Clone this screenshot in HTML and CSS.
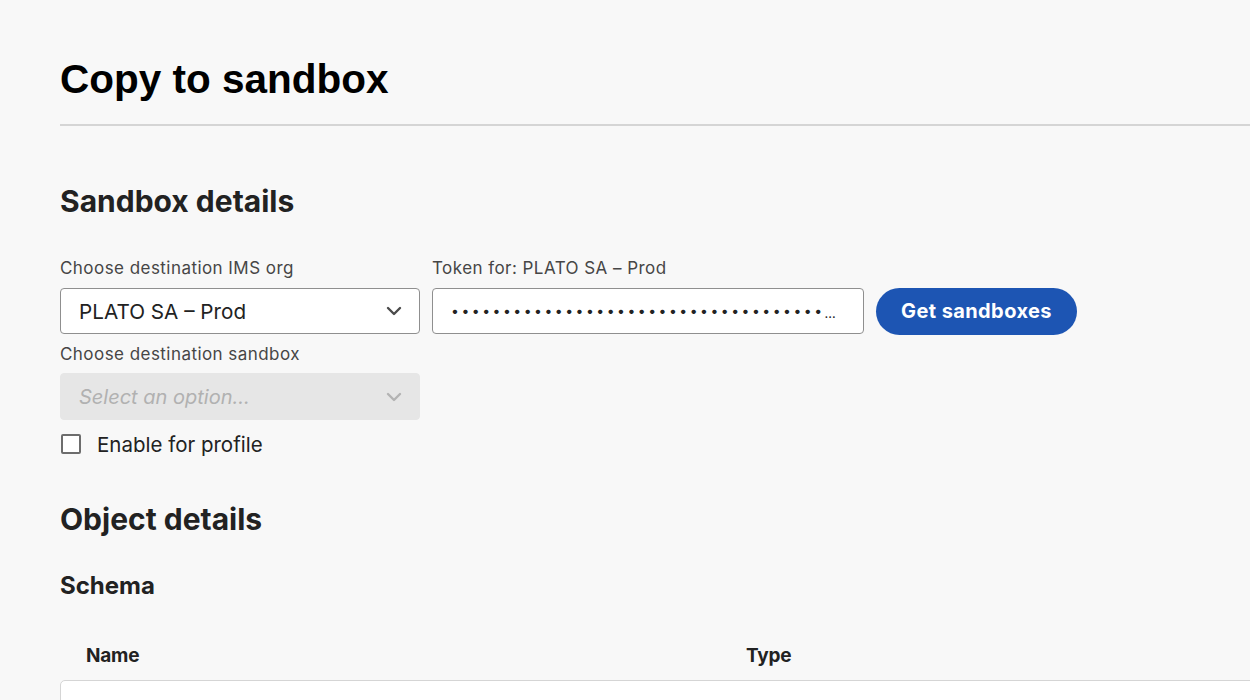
FILE: index.html
```html
<!DOCTYPE html>
<html lang="en">
<head>
<meta charset="utf-8">
<title>Copy to sandbox</title>
<link rel="stylesheet" href="styles.css">
</head>
<body>
<main class="page">
  <h1 class="title">Copy to sandbox</h1>
  <hr class="divider">

  <h2 class="section">Sandbox details</h2>

  <div class="field-row">
    <div class="field">
      <label class="label">Choose destination IMS org</label>
      <div class="picker">
        <span class="picker-value">PLATO SA – Prod</span>
        <svg class="chevron" width="16" height="10" viewBox="0 0 16 10"><path d="M2 2 L8 8 L14 2" fill="none" stroke="#4b4b4b" stroke-width="2.4" stroke-linecap="round" stroke-linejoin="round"/></svg>
      </div>
    </div>
    <div class="field">
      <label class="label">Token for: PLATO SA – Prod</label>
      <div class="textfield"><span class="dots">••••••••••••••••••••••••••••••••••••</span><span class="ellipsis">…</span></div>
    </div>
    <button class="btn">Get sandboxes</button>
  </div>

  <div class="field">
    <label class="label label-2">Choose destination sandbox</label>
    <div class="picker picker-disabled">
      <span class="picker-placeholder">Select an option...</span>
      <svg class="chevron" width="16" height="10" viewBox="0 0 16 10"><path d="M2 2 L8 8 L14 2" fill="none" stroke="#b3b3b3" stroke-width="2.4" stroke-linecap="round" stroke-linejoin="round"/></svg>
    </div>
  </div>

  <label class="checkbox-row">
    <span class="checkbox"></span>
    <span class="checkbox-label">Enable for profile</span>
  </label>

  <h2 class="section section-2">Object details</h2>
  <h3 class="subsection">Schema</h3>

  <div class="table">
    <div class="table-head">
      <span class="th th-name">Name</span>
      <span class="th">Type</span>
    </div>
    <div class="table-body"></div>
  </div>
</main>
</body>
</html>
```

FILE: styles.css
```css
html, body {
  margin: 0;
  padding: 0;
  background: #f8f8f8;
  overflow: hidden;
}
body {
  font-family: Inter, "Noto Sans", sans-serif;
  color: #222;
}
.page {
  width: 1240px;
  padding: 57px 0 0 60px;
}
.title {
  margin: 0;
  font-family: "Liberation Sans", Arial, sans-serif;
  font-weight: 700;
  font-size: 40.5px;
  line-height: 44px;
  color: #000;
}
.divider {
  margin: 23px 0 0 0;
  border: 0;
  height: 2px;
  background: #d5d5d5;
  width: 1240px;
}
.section {
  margin: 57px 0 0 0;
  font-size: 30px;
  line-height: 36px;
  font-weight: 700;
  color: #222;
}
.field-row {
  display: flex;
  align-items: flex-end;
  gap: 12px;
  margin-top: 39px;
}
.field {
  display: flex;
  flex-direction: column;
}
.label {
  font-size: 17px;
  line-height: 20px;
  letter-spacing: 0.45px;
  color: #464646;
  margin-bottom: 10px;
}
.label-2 {
  margin-top: 10px;
  margin-bottom: 9px;
}
.picker {
  box-sizing: border-box;
  width: 360px;
  height: 46px;
  border: 1px solid #8f8f8f;
  border-radius: 4px;
  background: #fff;
  display: flex;
  align-items: center;
  justify-content: space-between;
  padding: 0 17px 0 18px;
}
.picker-value {
  font-size: 20.7px;
  color: #222;
}
.picker-disabled {
  background: #e6e6e6;
  border-color: #e6e6e6;
  height: 47px;
}
.picker-placeholder {
  font-size: 20px;
  font-style: italic;
  color: #b1b1b1;
}
.textfield {
  box-sizing: border-box;
  width: 432px;
  height: 46px;
  border: 1px solid #8f8f8f;
  border-radius: 4px;
  background: #fff;
  display: flex;
  align-items: center;
  padding: 0 19px 0 18px;
}
.dots {
  white-space: nowrap;
  font-size: 14px;
  letter-spacing: 2.5px;
  line-height: 20px;
  color: #222;
}
.ellipsis {
  font-size: 13px;
  line-height: 20px;
  padding-top: 4px;
  color: #222;
}
.btn {
  height: 47px;
  width: 201px;
  border: 0;
  border-radius: 24px;
  background: #1d55b3;
  color: #fff;
  font-family: Inter, "Noto Sans", sans-serif;
  font-size: 20px;
  font-weight: 700;
  letter-spacing: 0.4px;
  cursor: pointer;
  margin-bottom: -1px;
  padding: 0 0 2px 0;
}
.checkbox-row {
  display: flex;
  align-items: center;
  gap: 16px;
  margin-top: 12px;
  height: 24px;
}
.checkbox {
  box-sizing: border-box;
  width: 20px;
  height: 20px;
  border: 2px solid #6d6d6d;
  border-radius: 2px;
  background: #fff;
  margin-left: 1px;
}
.checkbox-label {
  font-size: 20.5px;
  color: #222;
}
.section-2 {
  margin-top: 45px;
}
.subsection {
  margin: 35px 0 0 0;
  font-size: 24px;
  line-height: 28px;
  font-weight: 700;
  color: #222;
}
.table {
  margin-top: 44px;
}
.table-head {
  display: grid;
  grid-template-columns: 660px 1fr;
  padding-left: 26px;
  height: 36px;
  align-items: start;
}
.th {
  font-size: 19px;
  font-weight: 700;
  line-height: 24px;
  color: #222;
  letter-spacing: -0.2px;
}
.table-body {
  height: 60px;
  background: #fff;
  border: 1px solid #d5d5d5;
  border-radius: 5px 0 0 0;
}
```
